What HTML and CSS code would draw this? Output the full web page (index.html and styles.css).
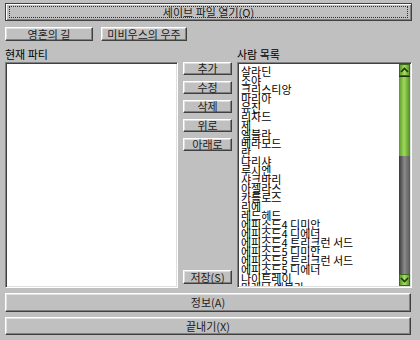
FILE: index.html
```html
<!DOCTYPE html>
<html>
<head>
	<meta charset="utf-8">
	<title>세이브 파일 편집</title>
	<link rel="stylesheet" href="styles.css">
</head>
<body>
	<div id="wrapper">
		<div class="Button Default"><span class="Focus">세이브 파일 열기(O)</span></div>
		<div id="gamerow">
			<div class="Button Game">영혼의 길</div>
			<div class="Button Game">미비우스의 우주</div>
		</div>
		<div id="main">
			<div class="Label">현재 파티</div>
			<div></div>
			<div class="Label">사람 목록</div>

			<div class="ListBox"></div>
			<div id="commands">
				<div class="Button Small">추가</div>
				<div class="Button Small">수정</div>
				<div class="Button Small">삭제</div>
				<div class="Button Small">위로</div>
				<div class="Button Small">아래로</div>
				<div class="Button Small Save">저장(S)</div>
			</div>
			<div class="ListBox People">
				<div class="Items">
					<div>살라딘</div>
					<div>소야</div>
					<div>크리스티앙</div>
					<div>마리아</div>
					<div>유진</div>
					<div>리차드</div>
					<div>제</div>
					<div>엘블라</div>
					<div>베라모드</div>
					<div>란</div>
					<div>나리샤</div>
					<div>루시엔</div>
					<div>샤크바리</div>
					<div>아셀라스</div>
					<div>카를로스</div>
					<div>리에</div>
					<div>레드헤드</div>
					<div>에피소드4 디미안</div>
					<div>에피소드4 디에너</div>
					<div>에피소드4 트리크런 서드</div>
					<div>에피소드5 디미안</div>
					<div>에피소드5 트리크런 서드</div>
					<div>에피소드5 디에너</div>
					<div>나이트레이</div>
					<div>마레나 엘블라</div>
					<div>아레나 엘블라스</div>
				</div>
				<div class="ScrollBar">
					<div class="Arrow">
						<svg width="9" height="6" viewBox="0 0 9 6"><path d="M1 5 L4.5 1.5 L8 5" fill="none" stroke="#1c3a0c" stroke-width="1.6"/></svg>
					</div>
					<div class="Thumb"></div>
					<div class="Track"></div>
					<div class="Arrow">
						<svg width="9" height="6" viewBox="0 0 9 6"><path d="M1 1 L4.5 4.5 L8 1" fill="none" stroke="#1c3a0c" stroke-width="1.6"/></svg>
					</div>
				</div>
			</div>
		</div>
		<div class="Button Wide">정보(A)</div>
		<div class="Button Wide Last">끝내기(X)</div>
	</div>
</body>
</html>
```

FILE: styles.css
```css
*
{
	padding: 0px;
	margin: 0px;
	box-sizing: border-box;
}
body
{
	color: black;
	background-color: #c0c0c0;
	width: 420px;
	height: 340px;
	overflow: hidden;
}
#wrapper
{
	font-size: 11px;
	font-family: "Noto Sans CJK KR", "DejaVu Sans", sans-serif;
	padding: 3px 8px 0px 5px;
	display: flex;
	flex-direction: column;
}
.Button
{
	display: flex;
	align-items: center;
	justify-content: center;
	background-color: #c0c0c0;
	border-top: 1px solid #ffffff;
	border-left: 1px solid #ffffff;
	border-right: 1px solid #404040;
	border-bottom: 1px solid #404040;
	box-shadow: inset -1px -1px 0px #808080, inset 1px 1px 0px #dfdfdf;
	color: #202020;
	line-height: 1;
	white-space: nowrap;
}
.Default
{
	height: 18px;
	border: 1px solid #404040;
	box-shadow: inset 1px 1px 0px #ffffff, inset -1px -1px 0px #808080;
	padding: 2px 3px;
}
.Focus
{
	flex: 1;
	align-self: stretch;
	display: flex;
	align-items: center;
	justify-content: center;
	outline: 1px dotted #303030;
	outline-offset: -1px;
}
#gamerow
{
	display: flex;
	gap: 8px;
	margin-top: 6px;
}
.Game
{
	width: 88px;
	height: 14px;
}
.Game + .Game
{
	width: 86px;
}
#main
{
	display: grid;
	grid-template-columns: 173px 49px 175px;
	grid-template-rows: 18px 226px;
	column-gap: 5px;
	margin-top: 3px;
}
.Label
{
	padding-top: 4px;
	line-height: 13px;
}
.Label:last-child
{
	padding-left: 1px;
}
.ListBox
{
	background-color: white;
	border-top: 1px solid #808080;
	border-left: 1px solid #808080;
	border-right: 1px solid #ffffff;
	border-bottom: 1px solid #ffffff;
	box-shadow: inset 1px 1px 0px #404040, inset -1px -1px 0px #dfdfdf;
}
#commands
{
	display: flex;
	flex-direction: column;
	gap: 6px;
	padding-bottom: 4px;
}
.Small
{
	height: 13px;
}
.Save
{
	height: 14px;
	margin-top: auto;
}
.People
{
	display: flex;
	overflow: hidden;
	padding: 1px 1px 1px 2px;
}
.Items
{
	flex: 1;
	font-size: 11px;
	line-height: 9px;
	overflow: hidden;
	padding-top: 3px;
	padding-left: 1px;
}
.ScrollBar
{
	width: 11px;
	display: flex;
	flex-direction: column;
}
.Arrow
{
	height: 12px;
	display: flex;
	align-items: center;
	justify-content: center;
	background: linear-gradient(to right, #5e9a2c, #a6dc64, #5e9a2c);
	border: 1px solid #3c6a1c;
}
.Thumb
{
	height: 80px;
	background: linear-gradient(to right, #5a9828, #9fd85a 45%, #8cc84a 60%, #4f8a22);
	border-top: 1px solid #1e3010;
}
.Track
{
	flex: 1;
	background: linear-gradient(to right, #3a3a3a, #8a8a8a 50%, #5a5a5a);
}
.Wide
{
	height: 19px;
	margin-top: 5px;
	width: 406px;
}
.Last
{
	height: 18px;
}
```
